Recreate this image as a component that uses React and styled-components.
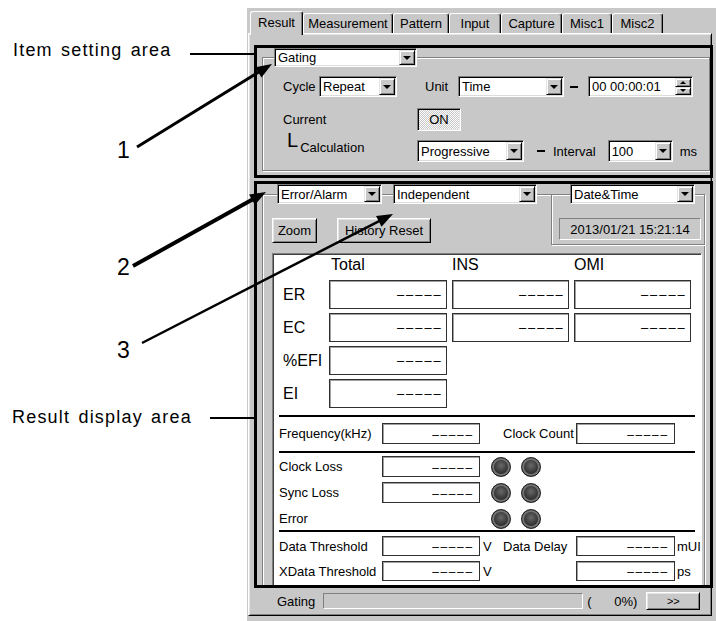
import React from "react";
import styled, { createGlobalStyle } from "styled-components";

const GRAY = "#c8c8c8";
const SHADOW = "#808080";

const GlobalStyle = createGlobalStyle`
  html, body { margin: 0; padding: 0; background: #fff; }
  body { font-family: "Liberation Sans", Arial, sans-serif; color: #000; }
  * { box-sizing: border-box; }
`;

const Page = styled.div`
  position: relative;
  display: flex;
  width: 716px;
  height: 621px;
  overflow: hidden;
  background: #fff;
`;

/* ---------- annotation column ---------- */
const Notes = styled.div`
  width: 247px;
  flex: none;
  display: flex;
  flex-direction: column;
`;
const NoteLabel = styled.div`
  margin-top: ${(p) => p.$top}px;
  padding-left: ${(p) => p.$left}px;
  font-size: 18px;
  line-height: 20px;
  letter-spacing: 1.2px;
  word-spacing: 2px;
  white-space: nowrap;
`;
const NoteNumber = styled.div`
  margin-top: ${(p) => p.$top}px;
  padding-left: 117px;
  font-size: 23px;
  line-height: 24px;
`;
const Overlay = styled.svg`
  position: absolute;
  left: 0;
  top: 0;
  width: 716px;
  height: 621px;
  pointer-events: none;
  z-index: 5;
`;

/* ---------- window ---------- */
const Window = styled.div`
  flex: none;
  width: 469px;
  height: 613px;
  margin-top: 8px;
  background: ${GRAY};
  display: flex;
  flex-direction: column;
  font-size: 13px;
`;
const TabStrip = styled.div`
  flex: none;
  display: flex;
  align-items: flex-end;
  height: 25px;
  padding-left: 3px;
  position: relative;
  z-index: 1;
`;
const Tab = styled.div`
  flex: none;
  width: ${(p) => p.$w}px;
  height: ${(p) => (p.$active ? 24 : 20)}px;
  margin-bottom: ${(p) => (p.$active ? -2 : 0)}px;
  padding-bottom: ${(p) => (p.$active ? 2 : 0)}px;
  background: ${GRAY};
  border-top: 1px solid #fff;
  border-left: 1px solid #fff;
  border-right: 1px solid #000;
  border-radius: 3px 3px 0 0;
  box-shadow: inset -1px 0 0 ${SHADOW};
  display: flex;
  align-items: center;
  justify-content: center;
  line-height: 15px;
  white-space: nowrap;
`;
const Panel = styled.div`
  flex: none;
  margin-left: 1px;
  width: 464px;
  height: 583px;
  border: 1px solid;
  border-color: #fff #000 #000 #fff;
  box-shadow: inset 1px 1px 0 #e4e4e4, inset -1px -1px 0 ${SHADOW};
  padding: 11px 0 0 5px;
  display: flex;
  flex-direction: column;
`;
const Frame = styled.div`
  flex: none;
  width: 459px;
  height: ${(p) => p.$h}px;
  margin-top: ${(p) => p.$mt || 0}px;
  border: 3px solid #000;
  overflow: hidden;
  display: flex;
  flex-direction: column;
`;
const GroupBox = styled.div`
  flex: none;
  margin: ${(p) => p.$m};
  width: ${(p) => p.$w}px;
  height: ${(p) => (p.$h ? `${p.$h}px` : "auto")};
  border: 1px solid ${SHADOW};
  box-shadow: inset 1px 1px 0 #fff, 1px 1px 0 #fff;
  display: flex;
  flex-direction: column;
`;
const Legend = styled.div`
  flex: none;
  display: flex;
  align-items: center;
  height: ${(p) => p.$h}px;
  margin: ${(p) => -p.$up}px 0 0 ${(p) => p.$ml}px;
`;
const Connector = styled.div`
  flex: none;
  width: ${(p) => p.$w}px;
`;
const Row = styled.div`
  flex: none;
  display: flex;
  align-items: center;
  height: ${(p) => p.$h}px;
  margin-top: ${(p) => p.$mt}px;
  padding-left: ${(p) => p.$pl || 0}px;
`;
const Label = styled.span`
  flex: none;
  width: ${(p) => (p.$w ? `${p.$w}px` : "auto")};
  margin-left: ${(p) => p.$ml || 0}px;
  white-space: nowrap;
`;
const CalcLabel = styled.div`
  flex: none;
  width: 134px;
  align-self: stretch;
  display: flex;
  align-items: flex-start;
`;
const BigL = styled.span`
  margin: -10px 0 0 4px;
  font-size: 20px;
  line-height: 20px;
`;
const CalcText = styled.span`
  margin-left: 2px;
  line-height: 15px;
`;
const Dash = styled.span`
  flex: none;
  width: 8px;
  height: 2px;
  background: #000;
  margin-left: ${(p) => p.$ml || 0}px;
`;

/* ---------- controls ---------- */
const Field = styled.div`
  flex: none;
  display: flex;
  width: ${(p) => p.$w}px;
  height: ${(p) => p.$h}px;
  margin-left: ${(p) => p.$ml || 0}px;
  background: #fff;
  border: 1px solid;
  border-color: ${SHADOW} #fff #fff ${SHADOW};
  box-shadow: inset 1px 1px 0 #000, inset -1px -1px 0 #dcdcdc;
  padding: 1px;
`;
const FieldText = styled.div`
  flex: 1;
  min-width: 0;
  padding-left: 2px;
  display: flex;
  align-items: center;
  white-space: nowrap;
  overflow: hidden;
`;
const DropBtn = styled.div`
  flex: none;
  width: 16px;
  background: ${GRAY};
  border: 1px solid;
  border-color: #e4e4e4 #000 #000 #e4e4e4;
  box-shadow: inset 1px 1px 0 #fff, inset -1px -1px 0 ${SHADOW};
  display: flex;
  align-items: center;
  justify-content: center;
  &::after {
    content: "";
    border-left: 4px solid transparent;
    border-right: 4px solid transparent;
    border-top: 4px solid #000;
  }
`;
const SpinCol = styled.div`
  flex: none;
  width: 16px;
  display: flex;
  flex-direction: column;
`;
const SpinBtn = styled.div`
  flex: 1;
  background: ${GRAY};
  border: 1px solid;
  border-color: #e4e4e4 #000 #000 #e4e4e4;
  box-shadow: inset 1px 1px 0 #fff, inset -1px -1px 0 ${SHADOW};
  display: flex;
  align-items: center;
  justify-content: center;
  &::after {
    content: "";
    border-left: 3px solid transparent;
    border-right: 3px solid transparent;
    ${(p) =>
      p.$up ? "border-bottom: 3px solid #000;" : "border-top: 3px solid #000;"}
  }
`;
const Button = styled.div`
  flex: none;
  width: ${(p) => p.$w}px;
  height: ${(p) => p.$h}px;
  margin-left: ${(p) => p.$ml || 0}px;
  background: ${GRAY};
  border: 1px solid;
  border-color: #fff #000 #000 #fff;
  box-shadow: inset 1px 1px 0 #e4e4e4, inset -1px -1px 0 ${SHADOW};
  display: flex;
  align-items: center;
  justify-content: center;
  font-size: ${(p) => p.$fs || 13}px;
  white-space: nowrap;
`;
const ToggleOn = styled.div`
  flex: none;
  width: 44px;
  height: 23px;
  border: 1px solid;
  border-color: ${SHADOW} #fff #fff ${SHADOW};
  box-shadow: inset 1px 1px 0 #000, inset -1px -1px 0 #e4e4e4;
  background: repeating-conic-gradient(#fff 0% 25%, ${GRAY} 0% 50%) 0 0 / 2px 2px;
  display: flex;
  align-items: center;
  justify-content: center;
`;
const HeaderRow = styled.div`
  flex: none;
  display: flex;
  align-items: flex-start;
`;
const ButtonRow = styled.div`
  flex: none;
  display: flex;
  gap: 20px;
  margin: 14px 0 0 9px;
`;
const DateDisplay = styled.div`
  flex: none;
  width: 142px;
  height: 22px;
  margin: 14px 0 4px 7px;
  border: 1px solid;
  border-color: ${SHADOW} #fff #fff ${SHADOW};
  display: flex;
  align-items: center;
  justify-content: center;
`;

/* ---------- result panel ---------- */
const ResultPanel = styled.div`
  flex: none;
  margin: 8px 0 0 9px;
  width: 430px;
  height: 334px;
  background: #fff;
  border: 1px solid;
  border-color: ${SHADOW} #fff #fff ${SHADOW};
  box-shadow: inset 1px 1px 0 #404040;
  display: flex;
  flex-direction: column;
`;
const MeasureGrid = styled.div`
  flex: none;
  display: grid;
  grid-template-columns: 41px 118px 117px 117px;
  grid-template-rows: 22px repeat(4, 29px);
  column-gap: 5px;
  row-gap: 4px;
  padding-left: 10px;
  font-size: 16px;
`;
const HeadCell = styled.div`
  grid-column: ${(p) => p.$col};
  display: flex;
  align-items: center;
  padding-left: ${(p) => p.$pl || 0}px;
`;
const RowName = styled.div`
  grid-column: 1;
  display: flex;
  align-items: center;
  white-space: nowrap;
`;
const ValueBox = styled.div`
  grid-column: ${(p) => p.$col || "auto"};
  background: #fff;
  border: 1px solid #303030;
  box-shadow: inset 1px 1px 0 #a0a0a0;
  display: flex;
  align-items: center;
  justify-content: flex-end;
  padding-right: ${(p) => p.$pr}px;
  font-size: ${(p) => p.$fs}px;
  letter-spacing: ${(p) => p.$ls}px;
  -webkit-text-stroke: 0.35px #000;
  white-space: nowrap;
`;
const Rule = styled.div`
  flex: none;
  height: 2px;
  background: #000;
  margin: ${(p) => p.$mt}px 6px 0;
`;
const InfoRow = styled.div`
  flex: none;
  display: grid;
  grid-template-columns: 103px 98px 23px 73px 99px auto;
  height: ${(p) => p.$h}px;
  margin-top: ${(p) => p.$mt}px;
  padding-left: 6px;
  align-items: stretch;
`;
const InfoLabel = styled.div`
  grid-column: ${(p) => p.$col};
  display: flex;
  align-items: center;
  padding-left: ${(p) => p.$pl || 0}px;
  white-space: nowrap;
`;
const LedPair = styled.div`
  grid-column: 3 / span 2;
  display: flex;
  align-items: center;
  gap: 10px;
  padding-left: 11px;
`;
const Led = styled.div`
  flex: none;
  width: 20px;
  height: 20px;
  border-radius: 50%;
  border: 1px solid #1e1e1e;
  background: radial-gradient(circle at 50% 42%, #6a6a6a 0%, #404040 40%, #222 75%);
  box-shadow: inset 0 0 0 2px #747474;
`;

/* ---------- status bar ---------- */
const StatusRow = styled.div`
  flex: none;
  display: flex;
  align-items: center;
  height: 18px;
  margin-top: 4px;
  padding-left: 23px;
`;
const Progress = styled.div`
  flex: none;
  width: 260px;
  height: 16px;
  margin-left: 8px;
  border: 1px solid;
  border-color: ${SHADOW} #fff #fff ${SHADOW};
`;
const Percent = styled.div`
  flex: none;
  width: 50px;
  margin-left: 4px;
  display: flex;
  justify-content: space-between;
`;

/* ---------- helpers ---------- */
function Select({ w, h = 21, ml, children }) {
  return (
    <Field $w={w} $h={h} $ml={ml}>
      <FieldText>{children}</FieldText>
      <DropBtn />
    </Field>
  );
}

function Arrow({ x1, y1, x2, y2, w, L = 16, H = 6 }) {
  const dx = x2 - x1;
  const dy = y2 - y1;
  const len = Math.hypot(dx, dy);
  const ux = dx / len;
  const uy = dy / len;
  const bx = x2 - ux * L;
  const by = y2 - uy * L;
  const nx = -uy;
  const ny = ux;
  return (
    <g>
      <line x1={x1} y1={y1} x2={bx + ux * 2} y2={by + uy * 2} stroke="#000" strokeWidth={w} />
      <polygon
        points={`${x2},${y2} ${bx + nx * H},${by + ny * H} ${bx - nx * H},${by - ny * H}`}
        fill="#000"
      />
    </g>
  );
}

const TABS = [
  ["Result", 53],
  ["Measurement", 90],
  ["Pattern", 56],
  ["Input", 52],
  ["Capture", 61],
  ["Misc1", 50],
  ["Misc2", 51],
];

const DASHES = "–––––";

function Big({ col }) {
  return (
    <ValueBox $col={col} $fs={12} $ls={2.5} $pr={3}>
      {DASHES}
    </ValueBox>
  );
}
function Small({ col }) {
  return (
    <ValueBox $col={col} $fs={11} $ls={2.2} $pr={5}>
      {DASHES}
    </ValueBox>
  );
}

export default function App() {
  return (
    <>
      <GlobalStyle />
      <Page>
        <Notes>
          <NoteLabel $top={40} $left={13}>Item setting area</NoteLabel>
          <NoteNumber $top={78}>1</NoteNumber>
          <NoteNumber $top={93}>2</NoteNumber>
          <NoteNumber $top={59}>3</NoteNumber>
          <NoteLabel $top={45} $left={12}>Result display area</NoteLabel>
        </Notes>

        <Window>
          <TabStrip>
            {TABS.map(([t, w], i) => (
              <Tab key={t} $w={w} $active={i === 0}>
                {t}
              </Tab>
            ))}
          </TabStrip>

          <Panel>
            <Frame $h={133}>
              <GroupBox $m="9px 0 0 5px" $w={448} $h={114}>
                <Legend $up={10} $h={19} $ml={11}>
                  <Select w={143} h={19}>Gating</Select>
                </Legend>
                <Row $mt={9} $h={21} $pl={20}>
                  <Label $w={36}>Cycle</Label>
                  <Select w={78}>Repeat</Select>
                  <Label $ml={28} $w={33}>Unit</Label>
                  <Select w={106}>Time</Select>
                  <Dash $ml={6} />
                  <Field $w={105} $h={21} $ml={10}>
                    <FieldText>00 00:00:01</FieldText>
                    <SpinCol>
                      <SpinBtn $up />
                      <SpinBtn />
                    </SpinCol>
                  </Field>
                </Row>
                <Row $mt={11} $h={23} $pl={20}>
                  <Label $w={134}>Current</Label>
                  <ToggleOn>ON</ToggleOn>
                </Row>
                <Row $mt={9} $h={22} $pl={20}>
                  <CalcLabel>
                    <BigL>L</BigL>
                    <CalcText>Calculation</CalcText>
                  </CalcLabel>
                  <Select w={107} h={22}>Progressive</Select>
                  <Dash $ml={13} />
                  <Label $ml={8}>Interval</Label>
                  <Select w={65} h={22} ml={12}>100</Select>
                  <Label $ml={7}>ms</Label>
                </Row>
              </GroupBox>
            </Frame>

            <Frame $h={407} $mt={3}>
              <GroupBox $m="10px 0 0 5px" $w={443} $h={420}>
                <Legend $up={11} $h={20} $ml={14}>
                  <Select w={105} h={20}>Error/Alarm</Select>
                  <Connector $w={11} />
                  <Select w={144} h={20}>Independent</Select>
                </Legend>
                <HeaderRow>
                  <ButtonRow>
                    <Button $w={45} $h={25}>Zoom</Button>
                    <Button $w={94} $h={25}>History Reset</Button>
                  </ButtonRow>
                  <GroupBox $m="-10px -1px 0 auto" $w={154}>
                    <Legend $up={11} $h={20} $ml={18}>
                      <Select w={125} h={20}>Date&amp;Time</Select>
                    </Legend>
                    <DateDisplay>2013/01/21 15:21:14</DateDisplay>
                  </GroupBox>
                </HeaderRow>

                <ResultPanel>
                  <MeasureGrid>
                    <HeadCell $col={2} $pl={2}>Total</HeadCell>
                    <HeadCell $col={3}>INS</HeadCell>
                    <HeadCell $col={4}>OMI</HeadCell>
                    <RowName>ER</RowName>
                    <Big />
                    <Big />
                    <Big />
                    <RowName>EC</RowName>
                    <Big />
                    <Big />
                    <Big />
                    <RowName>%EFI</RowName>
                    <Big col={2} />
                    <RowName>EI</RowName>
                    <Big col={2} />
                  </MeasureGrid>

                  <Rule $mt={7} />
                  <InfoRow $h={21} $mt={6}>
                    <InfoLabel $col={1}>Frequency(kHz)</InfoLabel>
                    <Small col={2} />
                    <InfoLabel $col={4}>Clock Count</InfoLabel>
                    <Small col={5} />
                  </InfoRow>

                  <Rule $mt={7} />
                  <InfoRow $h={21} $mt={3}>
                    <InfoLabel $col={1}>Clock Loss</InfoLabel>
                    <Small col={2} />
                    <LedPair>
                      <Led />
                      <Led />
                    </LedPair>
                  </InfoRow>
                  <InfoRow $h={21} $mt={5}>
                    <InfoLabel $col={1}>Sync Loss</InfoLabel>
                    <Small col={2} />
                    <LedPair>
                      <Led />
                      <Led />
                    </LedPair>
                  </InfoRow>
                  <InfoRow $h={21} $mt={5}>
                    <InfoLabel $col={1}>Error</InfoLabel>
                    <LedPair>
                      <Led />
                      <Led />
                    </LedPair>
                  </InfoRow>

                  <Rule $mt={1} />
                  <InfoRow $h={20} $mt={4}>
                    <InfoLabel $col={1}>Data Threshold</InfoLabel>
                    <Small col={2} />
                    <InfoLabel $col={3} $pl={3}>V</InfoLabel>
                    <InfoLabel $col={4}>Data Delay</InfoLabel>
                    <Small col={5} />
                    <InfoLabel $col={6} $pl={2}>mUI</InfoLabel>
                  </InfoRow>
                  <InfoRow $h={20} $mt={5}>
                    <InfoLabel $col={1}>XData Threshold</InfoLabel>
                    <Small col={2} />
                    <InfoLabel $col={3} $pl={3}>V</InfoLabel>
                    <Small col={5} />
                    <InfoLabel $col={6} $pl={2}>ps</InfoLabel>
                  </InfoRow>
                </ResultPanel>
              </GroupBox>
            </Frame>

            <StatusRow>
              <Label>Gating</Label>
              <Progress />
              <Percent>
                <span>(</span>
                <span>0%)</span>
              </Percent>
              <Button $w={54} $h={18} $ml={9} $fs={11}>
                &gt;&gt;
              </Button>
            </StatusRow>
          </Panel>
        </Window>

        <Overlay viewBox="0 0 716 621">
          <line x1={190} y1={54} x2={255} y2={54} stroke="#000" strokeWidth={2} />
          <line x1={210} y1={418} x2={255} y2={418} stroke="#000" strokeWidth={2} />
          <Arrow x1={137} y1={147} x2={272} y2={64} w={3} />
          <Arrow x1={133} y1={266} x2={266} y2={192} w={4} />
          <Arrow x1={142} y1={343} x2={393} y2={214} w={2.5} />
        </Overlay>
      </Page>
    </>
  );
}
